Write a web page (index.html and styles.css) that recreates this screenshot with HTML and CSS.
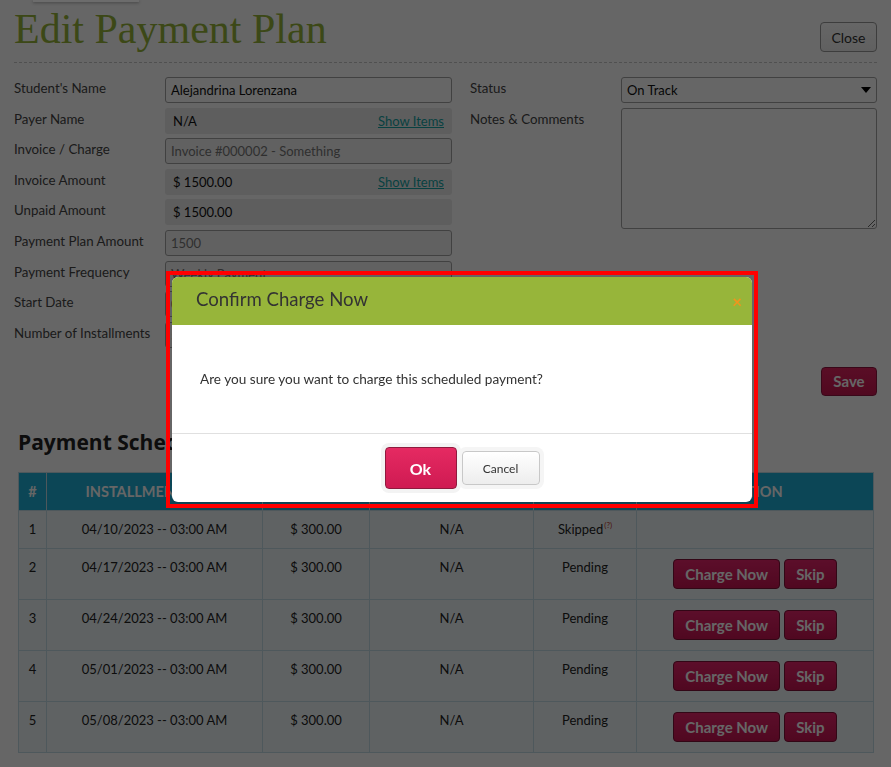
FILE: index.html
```html
<!DOCTYPE html>
<html lang="en">
<head>
    <meta charset="UTF-8">
    <meta name="viewport" content="width=device-width, initial-scale=1.0">
    <title>Edit Payment Plan</title>
    <link rel="stylesheet" href="styles.css">
</head>
<body>
    <div class="page">
        <div class="page-head">
            <h1 class="title">Edit Payment Plan</h1>
            <button class="btn-close">Close</button>
        </div>

        <div class="plan-form">
            <div class="form-col left">
                <div class="field"><label>Student's Name</label><div class="input">Alejandrina Lorenzana</div></div>
                <div class="field"><label>Payer Name</label><div class="input static">N/A <a class="link" href="#">Show Items</a></div></div>
                <div class="field"><label>Invoice / Charge</label><div class="input muted">Invoice #000002 - Something</div></div>
                <div class="field"><label>Invoice Amount</label><div class="input static">$ 1500.00 <a class="link" href="#">Show Items</a></div></div>
                <div class="field"><label>Unpaid Amount</label><div class="input static">$ 1500.00</div></div>
                <div class="field"><label>Payment Plan Amount</label><div class="input muted">1500</div></div>
                <div class="field"><label>Payment Frequency</label><div class="input muted">Weekly Payment</div></div>
                <div class="field"><label>Start Date</label><div class="input muted">04/10/2023</div></div>
                <div class="field"><label>Number of Installments</label><div class="input muted">5</div></div>
            </div>
            <div class="form-col right">
                <div class="field">
                    <label>Status</label>
                    <div class="input select">On Track
                        <svg width="10" height="6" viewBox="0 0 10 6"><path d="M0 0h10L5 6z" fill="#000"/></svg>
                    </div>
                </div>
                <div class="field"><label>Notes &amp; Comments</label><textarea class="notes"></textarea></div>
            </div>
        </div>

        <div class="form-actions"><button class="btn-save">Save</button></div>

        <h2 class="section-title">Payment Schedule</h2>
        <table class="schedule">
            <colgroup>
                <col style="width:28px"><col style="width:216px"><col style="width:107px">
                <col style="width:164px"><col style="width:103px"><col style="width:237px">
            </colgroup>
            <thead>
                <tr><th>#</th><th>Installment Date</th><th>Amount</th><th>Paid Date</th><th>Status</th><th>Action</th></tr>
            </thead>
            <tbody>
                <tr><td>1</td><td>04/10/2023 -- 03:00 AM</td><td>$ 300.00</td><td>N/A</td><td>Skipped<sup class="hint">(?)</sup></td><td></td></tr>
                <tr><td>2</td><td>04/17/2023 -- 03:00 AM</td><td>$ 300.00</td><td>N/A</td><td>Pending</td>
                    <td class="actions"><button class="btn-red">Charge Now</button><button class="btn-red">Skip</button></td></tr>
                <tr><td>3</td><td>04/24/2023 -- 03:00 AM</td><td>$ 300.00</td><td>N/A</td><td>Pending</td>
                    <td class="actions"><button class="btn-red">Charge Now</button><button class="btn-red">Skip</button></td></tr>
                <tr><td>4</td><td>05/01/2023 -- 03:00 AM</td><td>$ 300.00</td><td>N/A</td><td>Pending</td>
                    <td class="actions"><button class="btn-red">Charge Now</button><button class="btn-red">Skip</button></td></tr>
                <tr><td>5</td><td>05/08/2023 -- 03:00 AM</td><td>$ 300.00</td><td>N/A</td><td>Pending</td>
                    <td class="actions"><button class="btn-red">Charge Now</button><button class="btn-red">Skip</button></td></tr>
            </tbody>
        </table>
    </div>

    <div class="overlay"></div>
    <div class="top-tab"></div>

    <!-- confirm dialog, highlighted -->
    <div class="modal-frame">
        <div class="modal">
            <div class="modal-head">
                <span>Confirm Charge Now</span>
                <span class="modal-x">&times;</span>
            </div>
            <div class="modal-body">Are you sure you want to charge this scheduled payment?</div>
            <div class="modal-foot">
                <button class="btn-ok">Ok</button>
                <button class="btn-cancel">Cancel</button>
            </div>
        </div>
    </div>
</body>
</html>
```

FILE: styles.css
```css
body { margin: 0; font-family: Lato, "Open Sans", sans-serif; font-size: 13px; color: #333; background: #fff; }
button { font-family: inherit; cursor: pointer; }

.page { width: 863px; padding: 8px 14px 16px; }
.page-head { display: flex; justify-content: space-between; align-items: flex-start; padding-bottom: 10px; border-bottom: 1px dashed #c8c8c8; }
.title { margin: 0; font: normal 42px/42px "Liberation Serif", serif; color: #97b53a; }
.btn-close { margin-top: 14px; width: 57px; height: 30px; border: 1px solid #999; border-radius: 4px; background: linear-gradient(#fff, #f0f0f0); font-size: 14px; color: #333; }

.plan-form { display: flex; gap: 18px; margin-top: 14px; }
.form-col { display: flex; flex-direction: column; gap: 4.6px; }
.form-col.left { width: 438px; }
.form-col.right { flex: 1; }
.field { display: flex; }
.field label { width: 151px; flex: none; padding-top: 1px; line-height: 20px; color: #444; font-size: 13.3px; }
.input { flex: 1; box-sizing: border-box; height: 26px; padding: 0 5px; border: 1px solid #a3a3a3; border-radius: 3px; background: #fff; line-height: 24px; color: #111; }
.input.muted { background: #f2f2f2; color: #777; }
.input.static { display: flex; justify-content: space-between; padding: 0 7px; border-color: transparent; background: #ebebeb; }
.input.select { display: flex; justify-content: space-between; align-items: center; }
.link { color: #16a3a3; }
.notes { flex: 1; box-sizing: border-box; height: 121px; margin: 0; border: 1px solid #a3a3a3; border-radius: 3px; font: inherit; }

.form-actions { display: flex; justify-content: flex-end; margin-top: 19px; }
.btn-save { width: 56px; height: 29px; border: 1px solid #8e1640; border-radius: 4px; background: linear-gradient(#e0245f, #c81650); color: #fff; font-size: 15px; font-weight: bold; }

.section-title { margin: 33px 0 17px 4px; font: bold 21px/26px "Open Sans", sans-serif; color: #222; }

.schedule { width: 855px; margin: 0 4px; border-collapse: collapse; table-layout: fixed; }
.schedule th { padding: 9px 6px 8px; line-height: 20px; background: #1eaed8; color: #fff; font-size: 14.5px; text-transform: uppercase; border: 1px solid #c3dde5; }
.schedule td { padding: 8px 6px 9px; line-height: 20px; text-align: center; vertical-align: top; background: #eef5f7; border: 1px solid #c3dde5; color: #222; }
.schedule td.actions { padding: 10px 6px; }
.hint { vertical-align: top; line-height: 12px; margin-left: 1px; color: #c0392b; font-size: 8px; }
.btn-red { height: 30px; padding: 0 11px; margin: 0 2px; border: 1px solid #7e1238; border-radius: 4px; background: linear-gradient(#e6246a, #c81552); color: #fff; font-size: 15px; font-weight: bold; }

.overlay { position: fixed; inset: 0; background: rgba(0, 0, 0, 0.6); }
.top-tab { position: absolute; left: 33px; top: 0; width: 106px; height: 2px; background: #6c6c6c; box-shadow: 0 1px 3px rgba(0, 0, 0, 0.35); }

.modal-frame { position: absolute; left: 166px; top: 271px; padding: 2px; border: 4px solid #f00; }
.modal { width: 580px; border-radius: 6px; overflow: hidden; background: #fff; }
.modal-head { display: flex; justify-content: space-between; align-items: center; box-sizing: border-box; height: 48px; padding: 0 10px 5px 24px; background: #97b53a; font-size: 18.6px; color: #333; }
.modal-x { margin-top: 5px; color: #f0951e; font-size: 17px; font-weight: bold; }
.modal-body { display: flex; align-items: center; height: 108px; padding: 0 28px; border-bottom: 1px solid #e0e0e0; color: #333; font-size: 13.6px; }
.modal-foot { display: flex; justify-content: center; align-items: center; gap: 5px; height: 68px; }
.btn-ok { width: 72px; height: 42px; border: 1px solid #8e1a3e; border-radius: 4px; background: linear-gradient(#e52a62, #cf1a52); color: #fff; font-size: 16px; font-weight: bold; box-shadow: 0 0 0 4px #f3f3f3; }
.btn-cancel { width: 78px; height: 34px; border: 1px solid #c8c8c8; border-radius: 4px; background: linear-gradient(#fff, #ededed); color: #333; font-size: 12px; box-shadow: 0 0 0 4px #f5f5f5; }
```
